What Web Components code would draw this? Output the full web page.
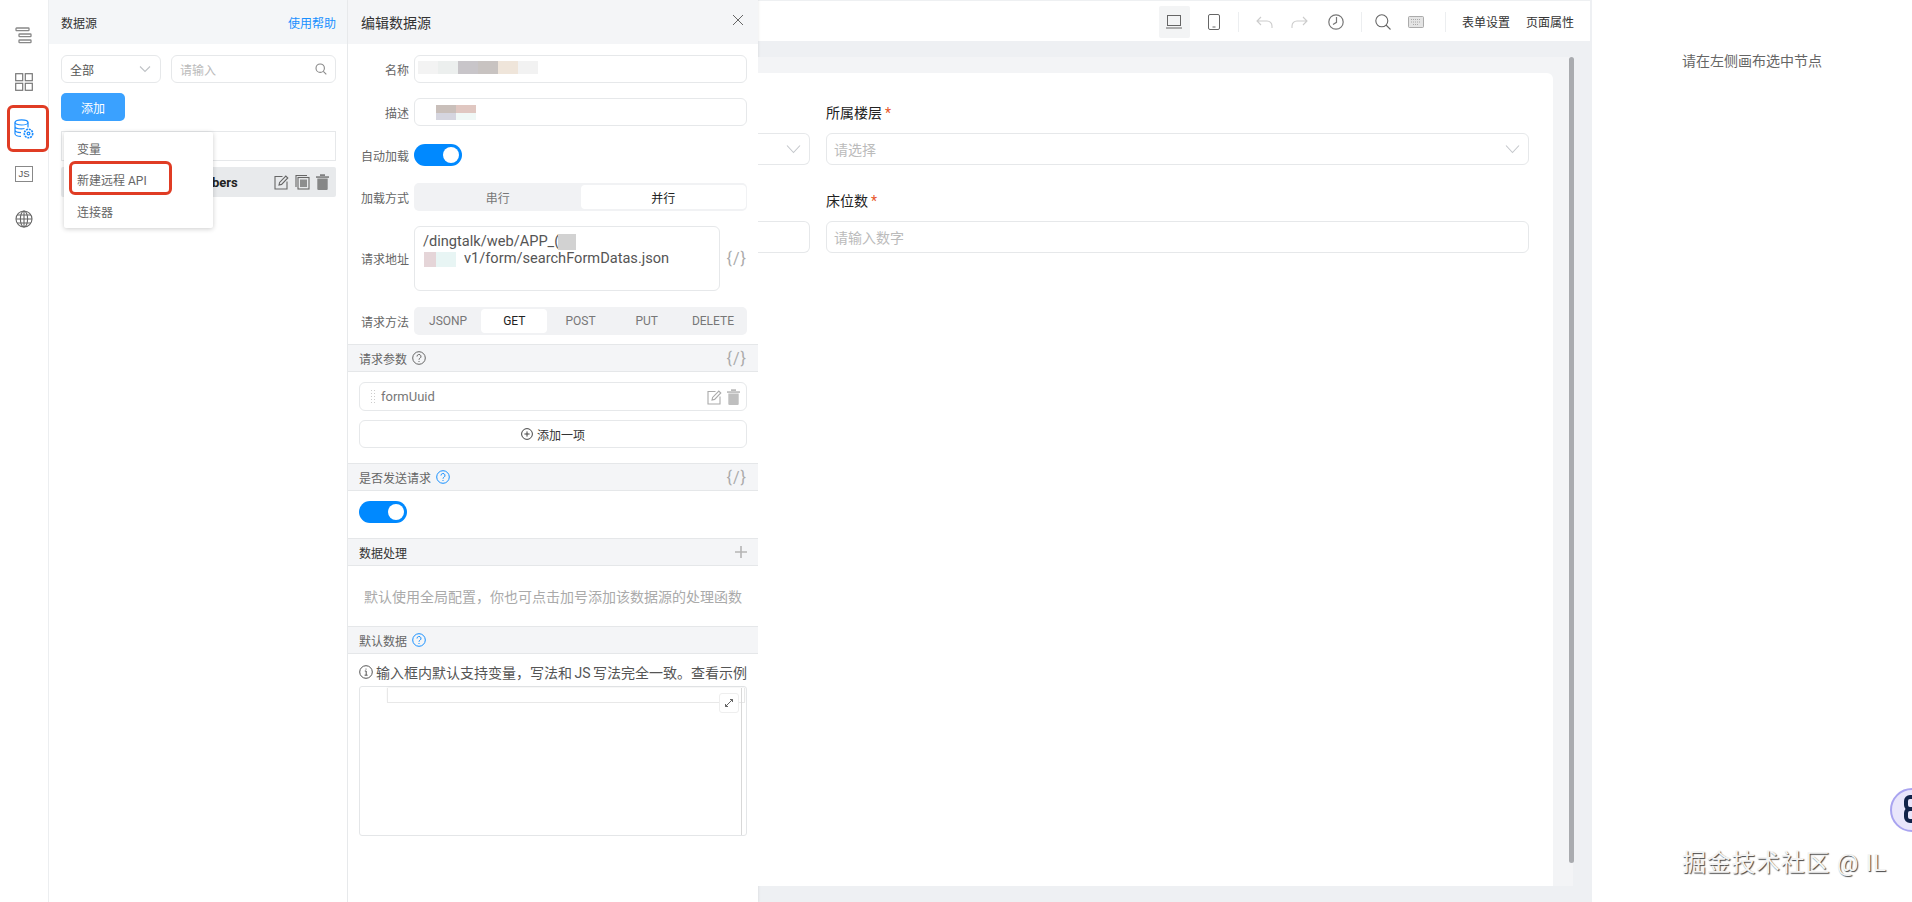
<!DOCTYPE html>
<html lang="zh">
<head>
<meta charset="utf-8">
<title>数据源</title>
<style>
  html, body { margin: 0; height: 100%; overflow: hidden; background: #fff; }
  body { font-family: Roboto, "Noto Sans CJK SC", sans-serif; font-size: 12px; color: #555; }
</style>
</head>
<body>
<ds-app></ds-app>
<script>
// icons shared between the elements
const icons = {
  chevron: '<svg width="14" height="14" viewBox="0 0 14 14" fill="none" stroke="#bfc2c6" stroke-width="1.1" style="display:block"><path d="M2 4.5l5 5 5-5"/></svg>',
  chevronBig: '<svg width="17" height="14" viewBox="0 0 17 14" fill="none" stroke="#c4c7cb" stroke-width="1.1" style="display:block"><path d="M2 3.5l6.5 7 6.5-7"/></svg>',
  search: '<svg width="12" height="12" viewBox="0 0 12 12" fill="none" stroke="#888" stroke-width="1.1" style="display:block"><circle cx="5.2" cy="5.2" r="4.2"/><path d="M8.3 8.3l3 3"/></svg>',
  edit: '<svg width="15" height="16" viewBox="0 0 15 16" fill="none" stroke="currentColor" stroke-width="1.1"><path d="M8.5 2.5H1v12.5h12V7.5"/><path d="M5 11l.6-2.6L11.8 2l2 2-6.2 6.4z"/></svg>',
  copy: '<svg width="15" height="16" viewBox="0 0 15 16" fill="none" stroke="currentColor" stroke-width="1.1"><path d="M12 1.5H1v11.5"/><rect x="3" y="3.5" width="11" height="11.5"/><rect x="5" y="5.5" width="7" height="7.5" fill="currentColor" stroke="none" opacity=".7"/></svg>',
  trash: '<svg width="13" height="16" viewBox="0 0 13 16" fill="currentColor"><rect x="0" y="2.4" width="13" height="1.3"/><rect x="4" y="0.4" width="5" height="1.4"/><path d="M1.3 4.6h10.4V15a1 1 0 0 1-1 1H2.3a1 1 0 0 1-1-1z" opacity=".75"/></svg>',
  help: (c) => `<svg width="14" height="14" viewBox="0 0 14 14" fill="none" stroke="${c}" stroke-width="1"><circle cx="7" cy="7" r="6.3"/><path d="M5 5.5a2 2 0 1 1 3 1.7c-.7.4-1 .8-1 1.5"/><path d="M7 10v1"/></svg>`,
  plusCircle: '<svg width="12" height="12" viewBox="0 0 12 12" fill="none" stroke="#444" stroke-width="1"><circle cx="6" cy="6" r="5.4"/><path d="M3.4 6h5.2M6 3.4v5.2"/></svg>',
  info: '<svg width="14" height="14" viewBox="0 0 14 14" fill="none" stroke="#555" stroke-width="1"><circle cx="7" cy="7" r="6.3"/><path d="M5.8 6h1.4v4M5.6 10.2h3M7 3.6v1"/></svg>'
};

class UiSwitch extends HTMLElement {
  constructor() {
    super();
    this.attachShadow({ mode: 'open' });
    this.shadowRoot.innerHTML = `
      <style>
        :host { display: block; width: 48px; height: 22px; border-radius: 11px; background: #0089ff; position: relative; }
        i { position: absolute; right: 3px; top: 3px; width: 16px; height: 16px; border-radius: 50%; background: #fff; }
      </style>
      <i></i>`;
  }
}

class UiSeg extends HTMLElement {
  constructor() {
    super();
    this.attachShadow({ mode: 'open' });
    const items = (this.getAttribute('items') || '').split(',');
    const active = this.getAttribute('active');
    this.shadowRoot.innerHTML = `
      <style>
        :host { display: flex; height: 28px; box-sizing: border-box; padding: 2px 1px; background: #f1f2f4; border-radius: 5px; color: #777; }
        span { flex: 1; display: flex; align-items: center; justify-content: center; border-radius: 4px; }
        .on { background: #fff; color: #222; }
      </style>
      ${items.map((t) => `<span class="${t === active ? 'on' : ''}">${t}</span>`).join('')}`;
  }
}

class UiInput extends HTMLElement {
  constructor() {
    super();
    this.attachShadow({ mode: 'open' });
    this.shadowRoot.innerHTML = `
      <style>
        :host { display: flex; align-items: center; box-sizing: border-box; height: var(--h, 28px); padding: 0 var(--pad, 8px); border: 1px solid #e6e8ea; border-radius: 6px; background: #fff; color: #bbb; }
        slot[name=end] { margin-left: auto; display: flex; }
        .t { flex: 1; }
      </style>
      <div class="t"><slot></slot></div>
      <slot name="end"></slot>`;
  }
}

class UiSection extends HTMLElement {
  constructor() {
    super();
    this.attachShadow({ mode: 'open' });
    this.shadowRoot.innerHTML = `
      <style>
        :host { display: flex; align-items: center; height: 28px; box-sizing: border-box; padding: 0 11px; background: #f4f5f7; border-top: 1px solid #e5e7e9; border-bottom: 1px solid #e5e7e9; color: #666; }
        ::slotted([slot=help]) { margin-left: 5px; display: flex; }
        .end { margin-left: auto; display: flex; align-items: center; color: #aaa; font-size: 16px; letter-spacing: 1px; }
      </style>
      <slot></slot><slot name="help"></slot>
      <div class="end"><slot name="end"></slot></div>`;
  }
}

class DsRail extends HTMLElement {
  constructor() {
    super();
    this.attachShadow({ mode: 'open' });
    this.shadowRoot.innerHTML = `
      <style>
        :host { display: block; position: relative; width: 48px; flex: none; background: #fff; border-right: 1px solid #eceef0; padding-top: 27px; box-sizing: content-box; }
        div { display: flex; justify-content: center; }
        svg { display: block; }
        .js { box-sizing: border-box; width: 18px; height: 16px; margin-top: 1px; border: 1px solid #888; color: #555; font-size: 9.5px; line-height: 14px; text-align: center; font-family: "Liberation Sans", sans-serif; }
      </style>
      <div style="height:46px"><svg width="18" height="17" viewBox="0 0 18 17" fill="none" stroke="#888" stroke-width="1.3"><rect x="1" y="1" width="13" height="2.6" rx=".6"/><rect x="4" y="7" width="12" height="2.6" rx=".6"/><rect x="4" y="13" width="12" height="2.6" rx=".6"/></svg></div>
      <div style="height:46px"><svg width="18" height="18" viewBox="0 0 18 18" fill="none" stroke="#777" stroke-width="1.2"><rect x=".7" y=".7" width="7" height="7"/><rect x="10.3" y=".7" width="7" height="7"/><rect x=".7" y="10.3" width="7" height="7"/><rect x="10.3" y="10.3" width="7" height="7"/></svg></div>
      <div style="height:46px"><svg width="20" height="20" viewBox="0 0 20 20" fill="none" stroke="#1a8cff" stroke-width="1.2"><ellipse cx="7.5" cy="3.4" rx="6.5" ry="2.6"/><path d="M1 3.4v11.4c0 1.5 3 2.6 6 2.6M14 3.4v5M1 7.2c0 1.5 3 2.6 6.5 2.6 1 0 2-.1 3-.3M1 11c0 1.5 3 2.5 6 2.6"/><circle cx="14.5" cy="14.5" r="4.2" stroke-width="1.6" stroke-dasharray="2 .8"/><circle cx="14.5" cy="14.5" r="1.4"/></svg></div>
      <div style="height:45px"><span class="js">JS</span></div>
      <div><svg width="18" height="18" viewBox="0 0 18 18" fill="none" stroke="#666" stroke-width="1.1"><circle cx="9" cy="9" r="8"/><ellipse cx="9" cy="9" rx="3.6" ry="8"/><path d="M1 9h16M2 5h14M2 13h14M9 1v16"/></svg></div>`;
  }
}

class DsPanel extends HTMLElement {
  constructor() {
    super();
    this.attachShadow({ mode: 'open' });
    this.shadowRoot.innerHTML = `
      <style>
        :host { display: block; position: relative; width: 299px; flex: none; box-sizing: border-box; background: #fff; border-right: 1px solid #e8eaec; }
        header { display: flex; justify-content: space-between; align-items: center; height: 44px; padding: 0 11px 0 12px; background: #f4f6f8; color: #333; }
        header a { color: #1890ff; }
        .body { display: flex; flex-direction: column; padding: 11px 11px 0 12px; }
        .filters { display: flex; gap: 10px; }
        .select { width: 100px; --pad: 8px; color: #555; }
        .search { flex: 1; }
        button { width: 64px; height: 28px; margin-top: 10px; border: 0; border-radius: 5px; background: #3aa1ff; color: #fff; font: inherit; }
        .blank { height: 30px; margin-top: 10px; box-sizing: border-box; border: 1px solid #e6e8ea; }
        .row { display: flex; align-items: center; height: 30px; margin-top: 6px; padding-left: 151px; padding-right: 7px; border-radius: 2px; background: #e8eaec; color: #222; font-size: 13px; font-weight: 700; }
        .tools { margin-left: auto; display: flex; gap: 6px; color: #666; }
        .menu { position: absolute; left: 15px; top: 132px; width: 149px; height: 96px; box-sizing: border-box; padding: 1px 0; background: #fff; border-radius: 2px; box-shadow: 0 1px 5px rgba(0, 0, 0, .2); color: #666; display: flex; flex-direction: column; }
        .menu span { flex: 1; display: flex; align-items: center; padding-left: 13px; }
      </style>
      <header><span>数据源</span><a>使用帮助</a></header>
      <div class="body">
        <div class="filters">
          <ui-input class="select">全部<span slot="end">${icons.chevron}</span></ui-input>
          <ui-input class="search">请输入<span slot="end">${icons.search}</span></ui-input>
        </div>
        <button>添加</button>
        <div class="blank"></div>
        <div class="row">bers<span class="tools">${icons.edit}${icons.copy}${icons.trash}</span></div>
      </div>
      <div class="menu"><span>变量</span><span>新建远程 API</span><span>连接器</span></div>`;
  }
}

class DsEditor extends HTMLElement {
  constructor() {
    super();
    this.attachShadow({ mode: 'open' });
    this.shadowRoot.innerHTML = `
      <style>
        :host { display: block; position: relative; width: 410px; flex: none; background: #fff; box-shadow: 1px 0 2px rgba(0, 0, 0, .06); }
        header { display: flex; justify-content: space-between; align-items: center; height: 44px; padding: 0 14px 0 13px; background: #f4f5f7; color: #333; font-size: 14px; }
        header svg { margin-top: -5px; }
        .form { display: flex; flex-direction: column; padding: 11px 11px 9px 13px; }
        .f { display: flex; align-items: center; gap: 5px; min-height: 28px; margin-bottom: 15px; }
        .f:last-child { margin-bottom: 0; }
        label { width: 48px; flex: none; text-align: right; color: #666; }
        .grow { flex: 1; }
        .mosaic { display: grid; grid-auto-flow: column; grid-auto-columns: 20px; margin-top: -3px; }
        .mosaic i { height: 13px; }
        .url { flex: 1; height: 65px; display: block; box-sizing: border-box; padding: 6px 8px; border: 1px solid #e6e8ea; border-radius: 6px; color: #555; font-size: 14.6px; line-height: 16px; }
        .url b { display: inline-block; font-weight: 400; vertical-align: middle; }
        .code { color: #aaa; font-size: 16px; letter-spacing: 1px; margin-left: 2px; }
        .pad { padding: 10px 11px 15px; display: flex; flex-direction: column; gap: 9px; }
        .param { display: flex; align-items: center; height: 29px; box-sizing: border-box; padding: 0 6px 0 10px; border: 1px solid #e6e8ea; border-radius: 6px; color: #777; font-size: 13px; }
        .grip { width: 6px; height: 16px; margin-right: 5px; background: radial-gradient(#ccc 40%, transparent 45%) 0 0 / 3px 3px; }
        .param .tools { margin-left: auto; display: flex; gap: 5px; color: #aaa; }
        .add { display: flex; align-items: center; justify-content: center; gap: 4px; height: 28px; box-sizing: border-box; border: 1px solid #e6e8ea; border-radius: 6px; color: #333; }
        .hint { height: 60px; display: flex; align-items: center; justify-content: center; color: #aaa; font-size: 14px; }
        .note { display: flex; align-items: center; gap: 3px; height: 28px; padding: 0 11px; margin-top: 4px; color: #555; font-size: 14px; white-space: nowrap; word-spacing: -1px; }
        .box { position: relative; height: 150px; margin: 0 11px; box-sizing: border-box; border: 1px solid #e4e6e8; border-radius: 3px; }
        .box .line { position: absolute; left: 27px; right: 1px; top: 1px; height: 14px; border: 1px solid #e8e8e8; border-top: 0; box-shadow: 0 -1px 2px rgba(0, 0, 0, .05); }
        .box .bar { position: absolute; right: 4px; top: 1px; bottom: 0; width: 1px; background: #d8d8d8; }
        .box .expand { position: absolute; right: 7px; top: 6px; width: 20px; height: 20px; box-sizing: border-box; display: flex; align-items: center; justify-content: center; background: #fff; border: 1px solid #eee; border-radius: 3px; }
      </style>
      <header><span>编辑数据源</span><svg width="12" height="12" viewBox="0 0 12 12" stroke="#666" stroke-width="1"><path d="M1 1l10 10M11 1L1 11"/></svg></header>
      <div class="form">
        <div class="f"><label>名称</label><ui-input class="grow"><div class="mosaic" style="margin-left:-5px"><i style="background:#f3f3f3"></i><i style="background:#ecefee"></i><i style="background:#c8c5c9"></i><i style="background:#c8c3c1"></i><i style="background:#efe5da"></i><i style="background:#f2f2f2"></i></div></ui-input></div>
        <div class="f"><label>描述</label><ui-input class="grow"><div class="mosaic" style="margin-left:13px;margin-top:0"><i style="background:linear-gradient(#c9bfba 55%,#d5d5df 55%);height:15px"></i><i style="background:linear-gradient(#e0c7c1 55%,#f0f8f6 55%);height:15px"></i></div></ui-input></div>
        <div class="f" style="margin-bottom:14px"><label>自动加载</label><ui-switch></ui-switch></div>
        <div class="f"><label>加载方式</label><ui-seg class="grow" items="串行,并行" active="并行"></ui-seg></div>
        <div class="f" style="margin-bottom:16px"><label>请求地址</label><div class="url">/dingtalk/web/APP_(<b style="width:18px;height:16px;background:#d2d2d2;margin-left:-1px"></b><br><b style="width:12px;height:15px;background:#e5d5d8;margin-left:1px"></b><b style="width:20px;height:15px;background:#e8f5f4"></b><span style="margin-left:8px">v1/form/searchFormDatas.json</span></div><span class="code">{/}</span></div>
        <div class="f"><label>请求方法</label><ui-seg class="grow" items="JSONP,GET,POST,PUT,DELETE" active="GET"></ui-seg></div>
      </div>
      <ui-section>请求参数<span slot="help">${icons.help('#666')}</span><span slot="end">{/}</span></ui-section>
      <div class="pad">
        <div class="param"><span class="grip"></span>formUuid<span class="tools">${icons.edit}${icons.trash}</span></div>
        <div class="add">${icons.plusCircle}<span>添加一项</span></div>
      </div>
      <ui-section>是否发送请求<span slot="help">${icons.help('#1890ff')}</span><span slot="end">{/}</span></ui-section>
      <div style="padding:10px 11px 15px"><ui-switch></ui-switch></div>
      <ui-section><span style="color:#333">数据处理</span><span slot="end"><svg width="12" height="12" viewBox="0 0 12 12" stroke="#b5b5b5" stroke-width="1.6" style="display:block"><path d="M0 6h12M6 0v12"/></svg></span></ui-section>
      <div class="hint">默认使用全局配置，你也可点击加号添加该数据源的处理函数</div>
      <ui-section>默认数据<span slot="help">${icons.help('#1890ff')}</span></ui-section>
      <div class="note">${icons.info}<span>输入框内默认支持变量，写法和 JS 写法完全一致。查看示例</span></div>
      <div class="box"><div class="line"></div><div class="bar"></div><div class="expand"><svg width="10" height="10" viewBox="0 0 10 10" fill="none" stroke="#555" stroke-width=".9"><path d="M1.5 8.5l7-7M6 1.5h2.5V4M1.5 6v2.5H4"/></svg></div></div>`;
  }
}

class DsToolbar extends HTMLElement {
  constructor() {
    super();
    this.attachShadow({ mode: 'open' });
    this.shadowRoot.innerHTML = `
      <style>
        :host { display: flex; align-items: center; justify-content: flex-end; height: 41px; flex: none; box-sizing: border-box; margin-right: 2px; padding: 1px 16px 0 0; background: #fff; border-top: 1px solid #eef0f2; color: #333; }
        span { display: flex; align-items: center; justify-content: center; }
        .sep { width: 1px; height: 20px; background: #eceef0; }
        .on { background: #f3f4f5; border-radius: 2px; }
        svg { display: block; }
      </style>
      <span class="on" style="width:31px;height:32px;margin-right:9px"><svg width="16" height="14" viewBox="0 0 16 14" fill="none" stroke="#666" stroke-width="1"><rect x="1.5" y=".5" width="13" height="10"/><path d="M0 13h16"/></svg></span>
      <span style="width:31px;margin-right:8px"><svg width="12" height="16" viewBox="0 0 12 16" fill="none" stroke="#666" stroke-width="1"><rect x=".5" y=".5" width="11" height="15" rx="1.5"/><path d="M4.5 13h3"/></svg></span>
      <i class="sep"></i>
      <span style="width:52px"><svg width="17" height="12" viewBox="0 0 17 12" fill="none" stroke="#ccc" stroke-width="1.1"><path d="M5 1L1 5l4 4M1 5h10a5 5 0 0 1 5 5v2"/></svg></span>
      <span style="width:18px"><svg width="17" height="12" viewBox="0 0 17 12" fill="none" stroke="#ccc" stroke-width="1.1"><path d="M12 1l4 4-4 4M16 5H6a5 5 0 0 0-5 5v2"/></svg></span>
      <span style="width:50px;margin-left:2px"><svg width="16" height="16" viewBox="0 0 16 16" fill="none" stroke="#777" stroke-width="1.2"><circle cx="8" cy="8" r="7.2"/><path d="M8.5 3v5.3L5 10.5"/></svg></span>
      <i class="sep"></i>
      <span style="width:43px"><svg width="16" height="16" viewBox="0 0 16 16" fill="none" stroke="#666" stroke-width="1.1"><circle cx="6.8" cy="6.8" r="6"/><path d="M11 11l4.5 4.5"/></svg></span>
      <span style="width:22px"><svg width="16" height="12" viewBox="0 0 16 12" fill="none" stroke="#999" stroke-width=".8"><rect x=".5" y=".5" width="15" height="11" rx="1" fill="#e4e4e4"/><path d="M3 3.5h10M3 6h10M5 8.5h6" stroke="#999" stroke-dasharray="1 1"/></svg></span>
      <span style="width:18px"></span>
      <i class="sep"></i>
      <span style="margin-left:16px">表单设置</span>
      <span style="margin-left:16px">页面属性</span>`;
  }
}

class DsCanvas extends HTMLElement {
  constructor() {
    super();
    this.attachShadow({ mode: 'open' });
    this.shadowRoot.innerHTML = `
      <style>
        :host { display: flex; flex-direction: column; flex: 1; min-width: 0; background: #eef0f3; }
        .stage { flex: none; height: 829px; margin: 16px 19px 0 0; padding: 16px 20px 0 0; box-sizing: border-box; background: #f3f4f6; position: relative; }
        .scroll { position: absolute; right: -1px; top: 0; width: 5px; height: 806px; border-radius: 3px; background: #a9abaf; }
        .card { height: 813px; box-sizing: border-box; padding: 30px 24px 0 0; background: #fff; border-radius: 0 6px 0 0; }
        .grid { display: grid; grid-template-columns: 52px 1fr; column-gap: 16px; row-gap: 26px; font-size: 14px; color: #222; }
        .lab { height: 20px; line-height: 20px; margin-bottom: 10px; }
        .lab em { color: #e8562a; font-style: normal; margin-left: 3px; }
        ui-input { --h: 32px; --pad: 7px; color: #bbb; }
        .left { border-left: 0; border-radius: 0 6px 6px 0; }
      </style>
      <ds-toolbar></ds-toolbar>
      <div class="stage">
        <div class="card">
          <div class="grid">
            <div><div class="lab">&nbsp;</div><ui-input class="left"><span slot="end">${icons.chevronBig}</span></ui-input></div>
            <div><div class="lab">所属楼层<em>*</em></div><ui-input>请选择<span slot="end">${icons.chevronBig}</span></ui-input></div>
            <div><div class="lab">&nbsp;</div><ui-input class="left"></ui-input></div>
            <div><div class="lab">床位数<em>*</em></div><ui-input>请输入数字</ui-input></div>
          </div>
        </div>
        <div class="scroll"></div>
      </div>`;
  }
}

class DsInspector extends HTMLElement {
  constructor() {
    super();
    this.attachShadow({ mode: 'open' });
    this.shadowRoot.innerHTML = `
      <style>
        :host { display: block; width: 320px; flex: none; background: #fff; padding-top: 51px; text-align: center; color: #666; font-size: 14px; line-height: 20px; }
      </style>
      <slot></slot>`;
  }
}

class DsApp extends HTMLElement {
  constructor() {
    super();
    this.attachShadow({ mode: 'open' });
    this.shadowRoot.innerHTML = `
      <style>
        :host { display: flex; position: relative; width: 1912px; height: 902px; overflow: hidden; }
        .mark { position: absolute; box-sizing: border-box; border: 3px solid #e03c24; border-radius: 6px; }
        .logo { position: absolute; left: 1890px; top: 788px; width: 44px; height: 44px; box-sizing: border-box; border: 2px solid #a9a4f0; border-radius: 50%; background: #e9e6fb; }
        .logo i { position: absolute; left: 12px; width: 16px; height: 16px; box-sizing: border-box; border: 4px solid #12244a; border-radius: 6px; }
        .water { position: absolute; left: 1682px; top: 847px; font-size: 24px; line-height: 32px; letter-spacing: .7px; color: #f4f4f4; text-shadow: 1px 1px 1px #444; white-space: nowrap; }
      </style>
      <ds-rail></ds-rail>
      <ds-panel></ds-panel>
      <ds-editor></ds-editor>
      <ds-canvas></ds-canvas>
      <ds-inspector>请在左侧画布选中节点</ds-inspector>
      <div class="mark" style="left:7px;top:105px;width:42px;height:47px"></div>
      <div class="mark" style="left:69px;top:161px;width:103px;height:34px"></div>
      <div class="logo"><i style="top:5px"></i><i style="top:17px"></i></div>
      <div class="water">掘金技术社区 @ IL</div>`;
  }
}

customElements.define('ui-switch', UiSwitch);
customElements.define('ui-seg', UiSeg);
customElements.define('ui-input', UiInput);
customElements.define('ui-section', UiSection);
customElements.define('ds-rail', DsRail);
customElements.define('ds-panel', DsPanel);
customElements.define('ds-editor', DsEditor);
customElements.define('ds-toolbar', DsToolbar);
customElements.define('ds-canvas', DsCanvas);
customElements.define('ds-inspector', DsInspector);
customElements.define('ds-app', DsApp);
</script>
</body>
</html>
